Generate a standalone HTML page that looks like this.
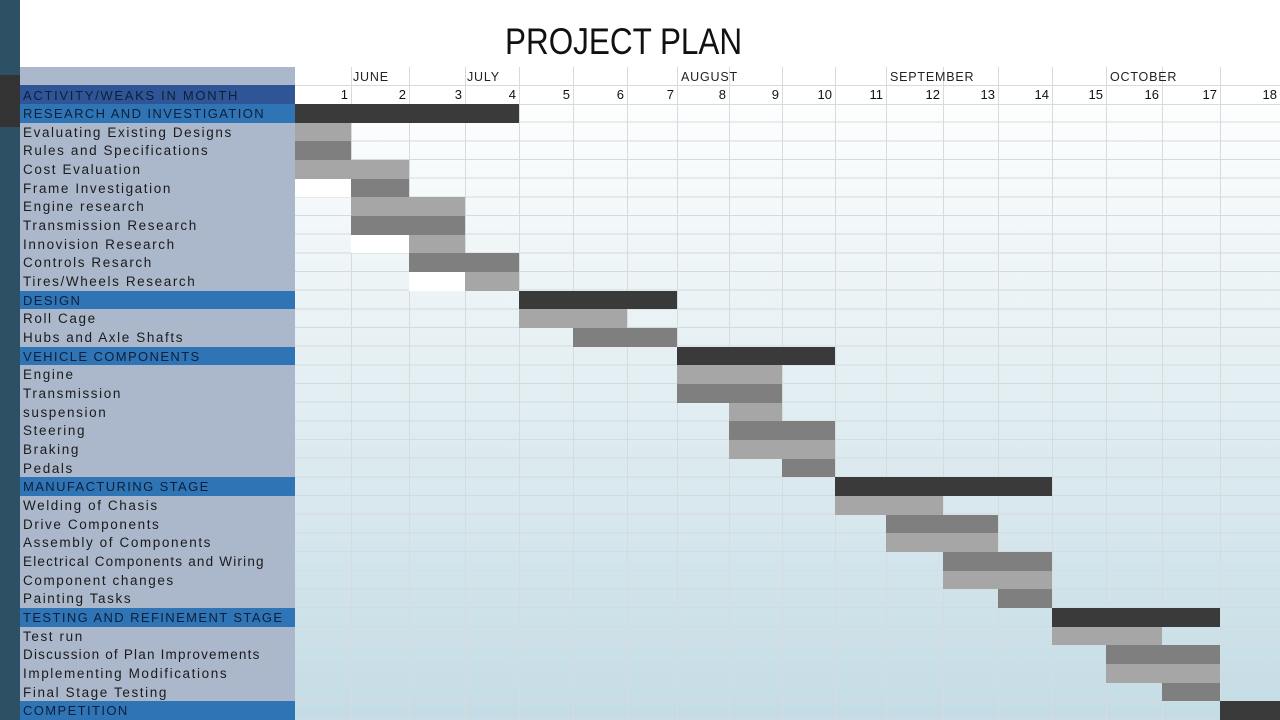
<!DOCTYPE html>
<html><head><meta charset="utf-8"><style>
*{margin:0;padding:0;box-sizing:border-box}
body{width:1280px;height:720px;position:relative;overflow:hidden;background:#fff;font-family:"Liberation Sans",sans-serif}
.a{position:absolute}
#strip{left:0;top:0;width:20px;height:720px;background:#2d5064}
#strip2{left:0;top:75px;width:20px;height:52px;background:#333}
#title{left:505px;top:21px;font-size:37px;color:#111;transform:scaleX(0.85);transform-origin:left top;font-weight:400}
#labels{left:20px;top:67px;width:275px;height:653px;background:#abb8cb}
#grid{left:295px;top:104px;width:985px;height:616px;background:linear-gradient(#fdfefe,#c4dce5)}
#hgrid{left:295px;top:104px;width:985px;height:616px;background:repeating-linear-gradient(to bottom,transparent 0,transparent 17.67px,#d4dadd 17.67px,#d4dadd 18.67px)}
.v{top:67px;width:1px;height:653px;background:#d6dbde}
.lab{left:23px;font-size:13.5px;letter-spacing:1.6px;color:#1b1b1b;height:18.67px;line-height:19px;white-space:nowrap}
.sec{left:20px;width:275px;height:18.67px;background:#2f75b5}
.sec span{position:absolute;left:3px;top:0;line-height:19px;font-size:13px;letter-spacing:1.4px;color:#0d1f3a;white-space:nowrap}
.b{height:18.67px}
.L{background:#a6a6a6}.M{background:#7f7f7f}.D{background:#3a3a3a}.W{background:#fff}
.mo{top:70px;font-size:12.5px;letter-spacing:0.8px;color:#222}
.n{top:87px;font-size:13px;color:#111;text-align:right}
</style></head><body>
<div class="a" id="strip"></div><div class="a" id="strip2"></div>
<div class="a" id="title">PROJECT PLAN</div>
<div class="a" id="labels"></div>
<div class="a" style="left:20px;top:85px;width:275px;height:19px;background:#2f5597"></div>
<div class="a" style="left:23px;top:85px;line-height:21px;font-size:13px;letter-spacing:1.7px;color:#0d1f3a">ACTIVITY/WEAKS IN MONTH</div>
<div class="a" id="grid"></div><div class="a" id="hgrid"></div>
<div class="a" style="left:295px;top:85px;width:985px;height:1px;background:#d6dbde"></div>
<div class="a" style="left:295px;top:104px;width:985px;height:1px;background:#d6dbde"></div>
<div class="a v" style="left:351px"></div><div class="a v" style="left:409px"></div><div class="a v" style="left:465px"></div><div class="a v" style="left:519px"></div><div class="a v" style="left:573px"></div><div class="a v" style="left:627px"></div><div class="a v" style="left:677px"></div><div class="a v" style="left:729px"></div><div class="a v" style="left:782px"></div><div class="a v" style="left:835px"></div><div class="a v" style="left:886px"></div><div class="a v" style="left:943px"></div><div class="a v" style="left:998px"></div><div class="a v" style="left:1052px"></div><div class="a v" style="left:1106px"></div><div class="a v" style="left:1162px"></div><div class="a v" style="left:1220px"></div>
<div class="a mo" style="left:353px">JUNE</div><div class="a mo" style="left:467px">JULY</div><div class="a mo" style="left:681px">AUGUST</div><div class="a mo" style="left:890px">SEPTEMBER</div><div class="a mo" style="left:1110px">OCTOBER</div>
<div class="a n" style="left:295px;width:53px">1</div><div class="a n" style="left:351px;width:55px">2</div><div class="a n" style="left:409px;width:53px">3</div><div class="a n" style="left:465px;width:51px">4</div><div class="a n" style="left:519px;width:51px">5</div><div class="a n" style="left:573px;width:51px">6</div><div class="a n" style="left:627px;width:47px">7</div><div class="a n" style="left:677px;width:49px">8</div><div class="a n" style="left:729px;width:50px">9</div><div class="a n" style="left:782px;width:50px">10</div><div class="a n" style="left:835px;width:48px">11</div><div class="a n" style="left:886px;width:54px">12</div><div class="a n" style="left:943px;width:52px">13</div><div class="a n" style="left:998px;width:51px">14</div><div class="a n" style="left:1052px;width:51px">15</div><div class="a n" style="left:1106px;width:53px">16</div><div class="a n" style="left:1162px;width:55px">17</div><div class="a n" style="left:1220px;width:57px">18</div>

<div class="a sec" style="top:104px"><span>RESEARCH AND INVESTIGATION</span></div>
<div class="a lab" style="top:122.7px">Evaluating Existing Designs</div>
<div class="a lab" style="top:141.3px">Rules and Specifications</div>
<div class="a lab" style="top:160px">Cost Evaluation</div>
<div class="a lab" style="top:178.7px">Frame Investigation</div>
<div class="a lab" style="top:197.3px">Engine research</div>
<div class="a lab" style="top:216px">Transmission Research</div>
<div class="a lab" style="top:234.7px">Innovision Research</div>
<div class="a lab" style="top:253.3px">Controls Resarch</div>
<div class="a lab" style="top:272px">Tires/Wheels Research</div>
<div class="a sec" style="top:290.7px"><span>DESIGN</span></div>
<div class="a lab" style="top:309.3px">Roll Cage</div>
<div class="a lab" style="top:328px">Hubs and Axle Shafts</div>
<div class="a sec" style="top:346.7px"><span>VEHICLE COMPONENTS</span></div>
<div class="a lab" style="top:365.3px">Engine</div>
<div class="a lab" style="top:384px">Transmission</div>
<div class="a lab" style="top:402.7px">suspension</div>
<div class="a lab" style="top:421.3px">Steering</div>
<div class="a lab" style="top:440px">Braking</div>
<div class="a lab" style="top:458.7px">Pedals</div>
<div class="a sec" style="top:477.3px"><span>MANUFACTURING STAGE</span></div>
<div class="a lab" style="top:496px">Welding of Chasis</div>
<div class="a lab" style="top:514.7px">Drive Components</div>
<div class="a lab" style="top:533.3px">Assembly of Components</div>
<div class="a lab" style="top:552px;letter-spacing:1.2px">Electrical Components and Wiring</div>
<div class="a lab" style="top:570.7px">Component changes</div>
<div class="a lab" style="top:589.3px">Painting Tasks</div>
<div class="a sec" style="top:608px"><span>TESTING AND REFINEMENT STAGE</span></div>
<div class="a lab" style="top:626.7px">Test run</div>
<div class="a lab" style="top:645.3px;letter-spacing:1.2px">Discussion of Plan Improvements</div>
<div class="a lab" style="top:664px">Implementing Modifications</div>
<div class="a lab" style="top:682.7px">Final Stage Testing</div>
<div class="a sec" style="top:701.3px"><span>COMPETITION</span></div>

<div class="a b D" style="top:104px;left:295px;width:224px"></div>
<div class="a b L" style="top:122.7px;left:295px;width:56px"></div>
<div class="a b M" style="top:141.3px;left:295px;width:56px"></div>
<div class="a b L" style="top:160px;left:295px;width:114px"></div>
<div class="a b W" style="top:178.7px;left:295px;width:56px"></div>
<div class="a b M" style="top:178.7px;left:351px;width:58px"></div>
<div class="a b L" style="top:197.3px;left:351px;width:114px"></div>
<div class="a b M" style="top:216px;left:351px;width:114px"></div>
<div class="a b W" style="top:234.7px;left:351px;width:58px"></div>
<div class="a b L" style="top:234.7px;left:409px;width:56px"></div>
<div class="a b M" style="top:253.3px;left:409px;width:110px"></div>
<div class="a b W" style="top:272px;left:409px;width:56px"></div>
<div class="a b L" style="top:272px;left:465px;width:54px"></div>
<div class="a b D" style="top:290.7px;left:519px;width:158px"></div>
<div class="a b L" style="top:309.3px;left:519px;width:108px"></div>
<div class="a b M" style="top:328px;left:573px;width:104px"></div>
<div class="a b D" style="top:346.7px;left:677px;width:158px"></div>
<div class="a b L" style="top:365.3px;left:677px;width:105px"></div>
<div class="a b M" style="top:384px;left:677px;width:105px"></div>
<div class="a b L" style="top:402.7px;left:729px;width:53px"></div>
<div class="a b M" style="top:421.3px;left:729px;width:106px"></div>
<div class="a b L" style="top:440px;left:729px;width:106px"></div>
<div class="a b M" style="top:458.7px;left:782px;width:53px"></div>
<div class="a b D" style="top:477.3px;left:835px;width:217px"></div>
<div class="a b L" style="top:496px;left:835px;width:108px"></div>
<div class="a b M" style="top:514.7px;left:886px;width:112px"></div>
<div class="a b L" style="top:533.3px;left:886px;width:112px"></div>
<div class="a b M" style="top:552px;left:943px;width:109px"></div>
<div class="a b L" style="top:570.7px;left:943px;width:109px"></div>
<div class="a b M" style="top:589.3px;left:998px;width:54px"></div>
<div class="a b D" style="top:608px;left:1052px;width:168px"></div>
<div class="a b L" style="top:626.7px;left:1052px;width:110px"></div>
<div class="a b M" style="top:645.3px;left:1106px;width:114px"></div>
<div class="a b L" style="top:664px;left:1106px;width:114px"></div>
<div class="a b M" style="top:682.7px;left:1162px;width:58px"></div>
<div class="a b D" style="top:701.3px;left:1220px;width:60px"></div>
</body></html>
